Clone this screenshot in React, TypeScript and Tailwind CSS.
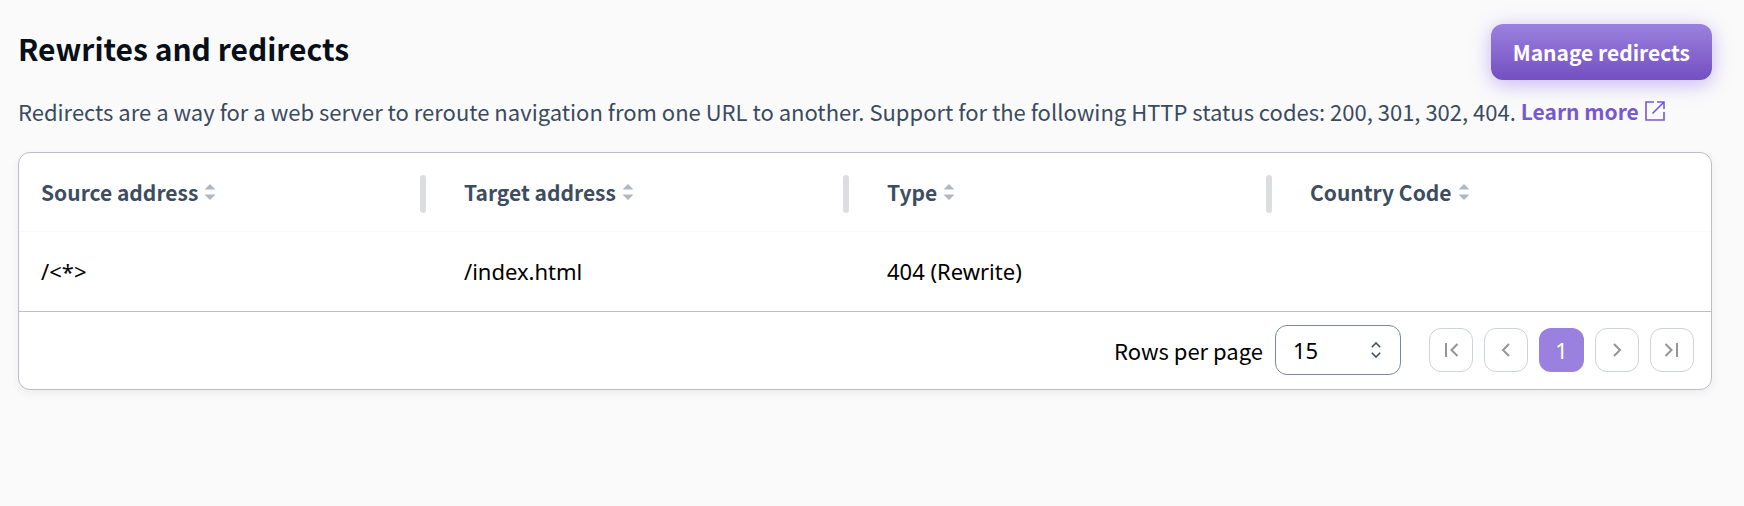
import { useState } from "react";
import type { ReactNode } from "react";

const columns = ["Source address", "Target address", "Type", "Country Code"];

const rows = [["/<*>", "/index.html", "404 (Rewrite)", ""]];

function SortIcon() {
  return (
    <svg className="h-4 w-3 shrink-0" viewBox="0 0 12 16" fill="#b0b7c1" aria-hidden="true">
      <path d="M6 0 11.500 5.5H.5zM6 16 .5 10.5h11z" />
    </svg>
  );
}

function ExternalIcon() {
  return (
    <svg className="h-5 w-5" viewBox="0 0 20 20" fill="none" stroke="currentColor" strokeWidth="1.6" aria-hidden="true">
      <path d="M9 1H1v18h18v-8M12 1h7v7M19 1 7.5 12.5" />
    </svg>
  );
}

function PageButton({ label, children }: { label: string; children: ReactNode }) {
  return (
    <button
      type="button"
      aria-label={label}
      className="flex size-11 items-center justify-center rounded-xl border border-[#ced3da] bg-white text-[#959595]"
    >
      <svg
        className="h-4 w-4"
        viewBox="0 0 16 16"
        fill="none"
        stroke="currentColor"
        strokeWidth="2"
        aria-hidden="true"
      >
        {children}
      </svg>
    </button>
  );
}

export default function App() {
  const [pageSize, setPageSize] = useState("15");

  return (
    <main className="min-h-screen bg-[#fafafa] pt-6 pr-8 pb-8 pl-[18px] font-['Noto_Sans',sans-serif] text-[22px] leading-8 text-black">
      <header className="flex items-start justify-between">
        <h1 className="pt-1.5 font-['Noto_Sans_CJK_JP',sans-serif] text-[30px] leading-9 font-bold text-[#070f18]">
          Rewrites and redirects
        </h1>
        <button
          type="button"
          className="h-14 rounded-xl bg-linear-to-b from-[#9b81df] to-[#744fc0] px-[22px] font-['Noto_Sans_CJK_JP',sans-serif] text-[21px] font-bold text-white shadow-[0_4px_20px_rgba(117,81,230,0.4)]"
        >
          Manage redirects
        </button>
      </header>

      <p className="mt-[15px] font-['Noto_Sans_CJK_JP',sans-serif] text-[#3a4a5f]">
        Redirects are a way for a web server to reroute navigation from one URL to another. Support for the following
        HTTP status codes: 200, 301, 302, 404.{" "}
        <a
          href="#learn-more"
          className="inline-flex items-center gap-1.5 align-top text-[21px] font-bold text-[#7759cf]"
        >
          Learn more
          <ExternalIcon />
        </a>
      </p>

      <section className="mt-[25px] overflow-hidden rounded-xl border border-[#bcbec8] bg-white shadow-[0_3px_10px_rgba(0,0,0,0.06)]">
        <table className="w-full table-fixed text-left">
          <thead>
            <tr className="h-[78px] border-b border-[#fafafa]">
              {columns.map((column, index) => (
                <th
                  key={column}
                  scope="col"
                  className="p-0 pl-[22px] font-['Noto_Sans_CJK_JP',sans-serif] text-[21px] font-bold text-[#3d4d61]"
                >
                  <div className="flex h-10 items-center justify-between">
                    <button type="button" className="flex items-center gap-1.5">
                      {column}
                      <SortIcon />
                    </button>
                    {index < columns.length - 1 && (
                      <span className="mt-1 mr-4 h-[38px] w-1.5 rounded-full bg-[#dcdddf]" />
                    )}
                  </div>
                </th>
              ))}
            </tr>
          </thead>
          <tbody>
            {rows.map((row) => (
              <tr key={row[0]} className="h-20">
                {row.map((cell, index) => (
                  <td key={columns[index]} className="p-0 pl-[22px]">
                    {cell}
                  </td>
                ))}
              </tr>
            ))}
          </tbody>
        </table>

        <footer className="flex items-center justify-end border-t border-[#bcbec8] pt-[13px] pr-[17px] pb-3.5">
          <label htmlFor="rows-per-page" className="font-['Noto_Sans_CJK_JP',sans-serif]">
            Rows per page
          </label>
          <div className="relative ml-3">
            <select
              id="rows-per-page"
              value={pageSize}
              onChange={(event) => setPageSize(event.target.value)}
              className="block h-[50px] w-[126px] appearance-none rounded-xl border border-[#7d8998] bg-white pl-[17px]"
            >
              <option>15</option>
              <option>30</option>
              <option>50</option>
            </select>
            <svg
              className="pointer-events-none absolute top-[17px] right-5 h-4 w-2.5"
              viewBox="0 0 10 16"
              fill="none"
              stroke="#414d5c"
              strokeWidth="1.6"
              aria-hidden="true"
            >
              <path d="M.8 5.2 5 1l4.200 4.200M.8 10.800 5 15l4.200-4.200" />
            </svg>
          </div>
          <nav aria-label="Pagination" className="ml-7 flex items-center gap-[11px]">
            <PageButton label="First page">
              <path d="M3 1v14M14.500 2 8.500 8l6 6" />
            </PageButton>
            <PageButton label="Previous page">
              <path d="M11 2 5 8l6 6" />
            </PageButton>
            <button
              type="button"
              aria-current="page"
              className="flex h-11 w-[45px] items-center justify-center rounded-xl bg-[#9b81df] text-white"
            >
              1
            </button>
            <PageButton label="Next page">
              <path d="M5 2l6 6-6 6" />
            </PageButton>
            <PageButton label="Last page">
              <path d="M13 1v14M1.500 2l6 6-6 6" />
            </PageButton>
          </nav>
        </footer>
      </section>
    </main>
  );
}
